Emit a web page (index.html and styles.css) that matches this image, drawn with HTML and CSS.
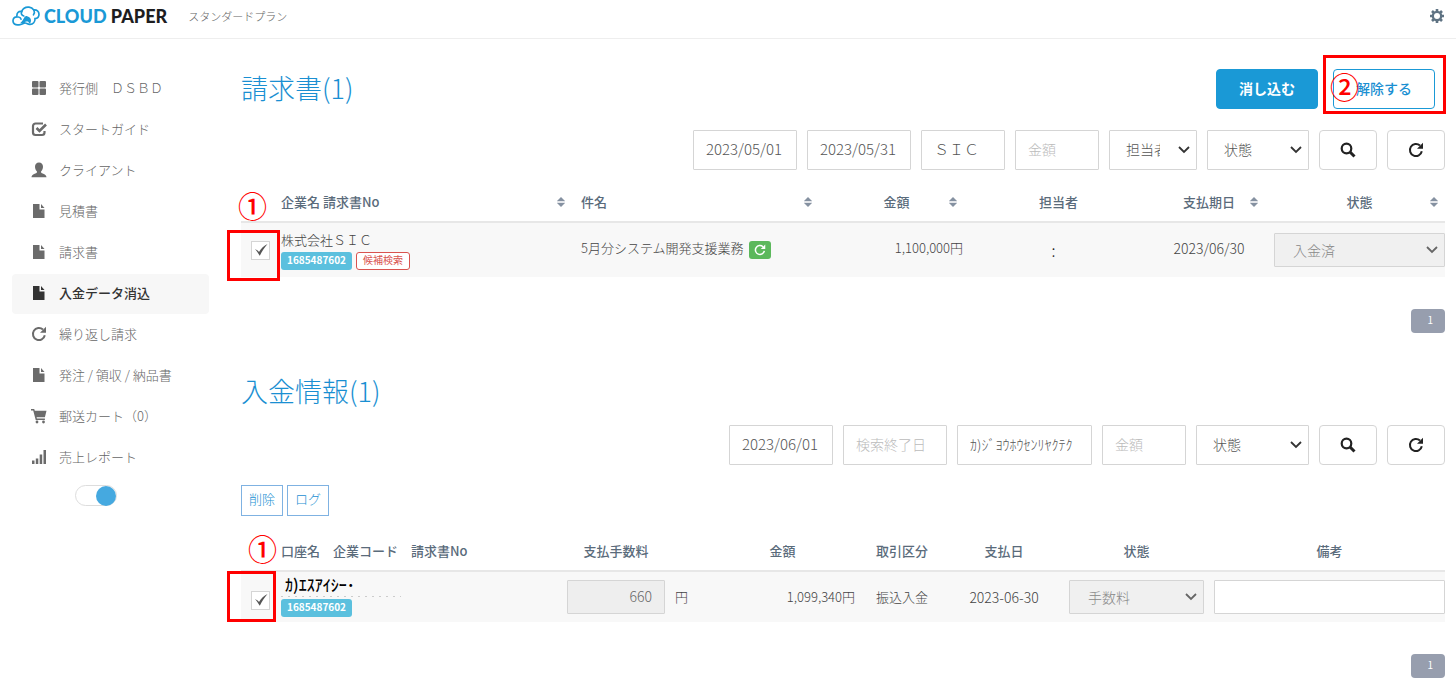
FILE: index.html
```html
<!DOCTYPE html>
<html lang="ja">
<head>
<meta charset="utf-8">
<title>CLOUD PAPER</title>
<meta name="viewport" content="width=device-width, initial-scale=1">
<link rel="stylesheet" href="styles.css">
</head>
<body>
<svg class="defs" aria-hidden="true">
  <symbol id="i-grid" viewBox="0 0 16 16"><path d="M2 1h4.500a1 1 0 0 1 1 1v4.500a1 1 0 0 1-1 1H2a1 1 0 0 1-1-1V2a1 1 0 0 1 1-1zM9.500 1H14a1 1 0 0 1 1 1v4.500a1 1 0 0 1-1 1H9.500a1 1 0 0 1-1-1V2a1 1 0 0 1 1-1zM2 8.500h4.500a1 1 0 0 1 1 1V14a1 1 0 0 1-1 1H2a1 1 0 0 1-1-1V9.500a1 1 0 0 1 1-1zM9.500 8.500H14a1 1 0 0 1 1 1V14a1 1 0 0 1-1 1H9.500a1 1 0 0 1-1-1V9.500a1 1 0 0 1 1-1z"/></symbol>
  <symbol id="i-check" viewBox="0 0 16 16"><path d="M12 2.500H4.500A2.500 2.500 0 0 0 2 5v6.500A2.500 2.500 0 0 0 4.500 14H11a2.500 2.500 0 0 0 2.500-2.500V10" fill="none" stroke="currentColor" stroke-width="2.200"/><path d="M5.500 7l3 3L15 3.500" fill="none" stroke="currentColor" stroke-width="2.600"/></symbol>
  <symbol id="i-user" viewBox="0 0 16 16"><path d="M8 .5c2.500 0 4 1.700 4 4.200 0 1.800-.7 3.600-1.900 4.500v1.300c0 .8 5.400 1.600 5.400 4.700H.5c0-3.100 5.400-3.900 5.400-4.700V9.200C4.700 8.300 4 6.500 4 4.700 4 2.200 5.500.5 8 .5z"/></symbol>
  <symbol id="i-file" viewBox="0 0 16 16"><path d="M2 1h6.500v5.500h5V15H2zM10 1l3.500 4H10z"/></symbol>
  <symbol id="i-reload" viewBox="0 0 16 16"><path d="M13.800 9.200A6 6 0 1 1 12 3.600" fill="none" stroke="currentColor" stroke-width="2"/><path d="M15 .8v6H9z"/></symbol>
  <symbol id="i-cart" viewBox="0 0 16 16"><path d="M0 1h3.200l.6 1.800H15.500l-1.600 6.400H5.600l.3 1.300h8v1.500H4.700L2.200 2.500H0z"/><circle cx="6" cy="14" r="1.400"/><circle cx="12.500" cy="14" r="1.400"/></symbol>
  <symbol id="i-bars" viewBox="0 0 16 16"><path d="M1 11.500h2.500V15H1zM4.800 9.500h2.500V15H4.800zM8.700 5.500h2.500V15H8.700zM12.500 1H15v14h-2.500z"/></symbol>
  <symbol id="i-search" viewBox="0 0 16 16"><circle cx="6.500" cy="6.500" r="4.800" fill="none" stroke="currentColor" stroke-width="2.200"/><path d="M10 10l4.500 4.500" stroke="currentColor" stroke-width="3"/></symbol>
  <symbol id="i-sort" viewBox="0 0 8 10"><path d="M4 0l4 4H0zM4 10L0 6h8z"/><path d="M0 4.500h8v1H0z" opacity=".45"/></symbol>
  <symbol id="i-gear" viewBox="0 0 16 16"><path d="M8 1v14M1 8h14M3 3l10 10M13 3L3 13" stroke="currentColor" stroke-width="2.600"/><circle cx="8" cy="8" r="5.300"/><circle cx="8" cy="8" r="3" fill="#fff"/></symbol>
  <symbol id="i-tick" viewBox="0 0 14 14"><path d="M1 6l3 1.800 1 1.200C7 5.500 10 2.500 13.500 1 10.500 4.500 8 8 5.800 12.800 4.500 11 3 8 1 6z"/></symbol>
  <symbol id="i-down" viewBox="0 0 12 8"><path d="M1 1l5 5 5-5" fill="none" stroke="currentColor" stroke-width="1.800"/></symbol>
</svg>

<header class="topbar">
  <a class="brand" href="#">
    <svg class="brand-mark" viewBox="0 0 28 20" aria-hidden="true"><g fill="none" stroke="#1a99d6" stroke-width="1.700" stroke-linecap="round"><path d="M7 18.800C3 19.500.9 17.300 1 14.700c.1-2.300 1.800-3.700 4-3.800-.6-3.900 1.500-6 4.700-5.500C11 2.300 14 .9 17 1.200c2.300.2 3.800 1.300 4.800 2.800 3-.4 5.200 1.500 5.200 4.300 0 2.700-1.600 4.200-4 4.300.2 3.200-2 5.500-5 5.700-2.500.2-3.500-1.500-5-1.300-1.800.2-3 1.500-6 1.800z"/><path d="M6.500 11c1.500.2 2.300 1 2.500 2.200M9.800 5.500c-1.500 2.500.5 4 2 4.500M22 4.500c.8 1.800.4 3.300-.5 4.300"/></g><path d="M8 17.200c1.500-1 3-3.200 4-5.200.8-1.600 2-2.500 3.600-1.600 2 .6 3.400 1.800 3.400 4 0 1.500-.6 2.600-1.500 3.200l-1.500-2.100-2.300.1-1.200 1.600c-1.200-.5-3 .4-4.500 0z" fill="#1a99d6"/></svg>
    <span class="brand-name"><span class="brand-blue">CLOUD</span> PAPER</span>
  </a>
  <span class="plan">スタンダードプラン</span>
  <button class="gear" type="button" aria-label="設定"><svg class="icon"><use href="#i-gear"/></svg></button>
</header>

<div class="layout">
  <nav class="sidebar">
    <a href="#"><svg class="icon"><use href="#i-grid"/></svg>発行側　ＤＳＢＤ</a>
    <a href="#"><svg class="icon"><use href="#i-check"/></svg>スタートガイド</a>
    <a href="#"><svg class="icon"><use href="#i-user"/></svg>クライアント</a>
    <a href="#"><svg class="icon"><use href="#i-file"/></svg>見積書</a>
    <a href="#"><svg class="icon"><use href="#i-file"/></svg>請求書</a>
    <a href="#" class="active"><svg class="icon"><use href="#i-file"/></svg>入金データ消込</a>
    <a href="#"><svg class="icon"><use href="#i-reload"/></svg>繰り返し請求</a>
    <a href="#"><svg class="icon"><use href="#i-file"/></svg>発注 / 領収 / 納品書</a>
    <a href="#"><svg class="icon"><use href="#i-cart"/></svg>郵送カート（0）</a>
    <a href="#"><svg class="icon"><use href="#i-bars"/></svg>売上レポート</a>
    <input class="switch" type="checkbox" role="switch" checked aria-label="表示切替">
  </nav>

  <main class="main">
    <section class="invoices">
      <div class="title-row">
        <h1>請求書(1)</h1>
        <div class="actions">
          <button class="btn primary" type="button">消し込む</button>
          <div class="marked">
            <button class="btn outline" type="button">解除する</button>
            <span class="frame frame-action"></span>
            <span class="mark mark-action">②</span>
          </div>
        </div>
      </div>
      <form class="filters">
        <input class="w-date" type="text" value="2023/05/01" aria-label="検索開始日">
        <input class="w-date" type="text" value="2023/05/31" aria-label="検索終了日">
        <input class="w-short" type="text" value="ＳＩＣ" aria-label="企業名">
        <input class="w-short" type="text" placeholder="金額" aria-label="金額">
        <div class="select w-staff"><select aria-label="担当者"><option>担当者</option></select><svg><use href="#i-down"/></svg></div>
        <div class="select w-state"><select aria-label="状態"><option>状態</option></select><svg><use href="#i-down"/></svg></div>
        <button class="tool" type="button" aria-label="検索"><svg class="icon"><use href="#i-search"/></svg></button>
        <button class="tool" type="button" aria-label="再読込"><svg class="icon"><use href="#i-reload"/></svg></button>
      </form>
      <table class="grid">
        <colgroup><col class="c40"><col><col class="c247"><col class="c145"><col class="c171"><col class="c130"><col class="c171"></colgroup>
        <thead>
          <tr>
            <th class="check"><span class="mark mark-head">①</span></th>
            <th><div class="head start">企業名 請求書No<svg class="sort"><use href="#i-sort"/></svg></div></th>
            <th><div class="head start">件名<svg class="sort"><use href="#i-sort"/></svg></div></th>
            <th><div class="head amount">金額<svg class="sort"><use href="#i-sort"/></svg></div></th>
            <th>担当者</th>
            <th><div class="head">支払期日<svg class="sort"><use href="#i-sort"/></svg></div></th>
            <th><div class="head state">状態<svg class="sort"><use href="#i-sort"/></svg></div></th>
          </tr>
        </thead>
        <tbody>
          <tr>
            <td class="check"><label class="tick"><input type="checkbox" checked aria-label="株式会社ＳＩＣを選択"><svg><use href="#i-tick"/></svg></label><span class="frame frame-invoice"></span></td>
            <td><div class="company">株式会社ＳＩＣ</div><div class="tags"><span class="tag info">1685487602</span><a class="tag danger" href="#">候補検索</a></div></td>
            <td><div class="subject"><span class="raised">5月分システム開発支援業務</span><button class="repeat" type="button" aria-label="繰り返し"><svg class="icon"><use href="#i-reload"/></svg></button></div></td>
            <td class="num raised">1,100,000円</td>
            <td class="center staff">:</td>
            <td class="center date raised">2023/06/30</td>
            <td><div class="select cell-select"><select disabled aria-label="状態"><option>入金済</option></select><svg><use href="#i-down"/></svg></div></td>
          </tr>
        </tbody>
      </table>
      <div class="pager"><a href="#">1</a></div>
    </section>

    <section class="payments">
      <div class="title-row"><h2>入金情報(1)</h2></div>
      <form class="filters">
        <input class="w-date" type="text" value="2023/06/01" aria-label="検索開始日">
        <input class="w-date" type="text" placeholder="検索終了日" aria-label="検索終了日">
        <input class="w-account" type="text" value="ｶ)ｼﾞﾖｳﾎｳｾﾝﾘﾔｸﾃｸ" aria-label="口座名">
        <input class="w-short" type="text" placeholder="金額" aria-label="金額">
        <div class="select w-state2"><select aria-label="状態"><option>状態</option></select><svg><use href="#i-down"/></svg></div>
        <button class="tool" type="button" aria-label="検索"><svg class="icon"><use href="#i-search"/></svg></button>
        <button class="tool" type="button" aria-label="再読込"><svg class="icon"><use href="#i-reload"/></svg></button>
      </form>
      <div class="mini-actions">
        <button type="button">削除</button>
        <button type="button">ログ</button>
      </div>
      <table class="grid payment-grid">
        <colgroup><col class="c40"><col><col class="c118"><col class="c25"><col class="c165"><col class="c74"><col class="c130"><col class="c145"><col class="c231"></colgroup>
        <thead>
          <tr>
            <th class="check"><span class="mark mark-head2">①</span></th>
            <th class="left">口座名　企業コード　請求書No</th>
            <th>支払手数料</th>
            <th></th>
            <th>金額</th>
            <th>取引区分</th>
            <th>支払日</th>
            <th class="gap-right">状態</th>
            <th>備考</th>
          </tr>
        </thead>
        <tbody>
          <tr>
            <td class="check lowered"><label class="tick"><input type="checkbox" checked aria-label="ｶ)ｴｽｱｲｼｰを選択"><svg><use href="#i-tick"/></svg></label><span class="frame frame-payment"></span></td>
            <td class="raised"><div class="payer">ｶ)ｴｽｱｲｼｰ･</div><div class="trace"></div><div class="tags"><span class="tag info">1685487602</span></div></td>
            <td class="fee-cell"><input class="cell fee" type="text" value="660" disabled aria-label="支払手数料"></td>
            <td>円</td>
            <td class="num">1,099,340円</td>
            <td class="center">振込入金</td>
            <td class="center date">2023-06-30</td>
            <td class="gap-right"><div class="select cell-select"><select disabled aria-label="状態"><option>手数料</option></select><svg><use href="#i-down"/></svg></div></td>
            <td><input class="cell" type="text" aria-label="備考"></td>
          </tr>
        </tbody>
      </table>
      <div class="pager"><a href="#">1</a></div>
    </section>
  </main>
</div>
</body>
</html>
```
FILE: styles.css
```css
* { box-sizing: border-box; }

body {
  margin: 0;
  background: #fff;
  color: #444;
  font: 300 13px/18px "Noto Sans CJK JP", sans-serif;
}

button, input, select { font: inherit; color: inherit; margin: 0; }
button { cursor: pointer; }
a { color: inherit; text-decoration: none; }

.defs { position: absolute; width: 0; height: 0; }
.icon { width: 16px; height: 16px; fill: currentColor; flex: none; display: block; }

/* Top bar */
.topbar {
  display: flex;
  align-items: center;
  height: 39px;
  padding: 0 11px 6px 12px;
  border-bottom: 1px solid #eee;
}
.brand { display: flex; align-items: center; gap: 4px; }
.brand-mark { width: 28px; height: 20px; }
.brand-name { color: #1d1d1f; font: 900 18px/24px Lato, sans-serif; }
.brand-blue { color: #1a99d6; }
.plan { margin-left: 21px; color: #666; font-size: 11px; }
.gear { margin-left: auto; padding: 0; border: 0; background: none; color: #5f7383; }

.layout { display: flex; gap: 32px; padding: 30px 11px 0 12px; }

/* Side navigation */
.sidebar { display: flex; flex-direction: column; gap: 1px; flex: none; width: 197px; }
.sidebar a {
  display: flex;
  align-items: center;
  gap: 12px;
  height: 40px;
  padding: 0 0 2px 19px;
  border-radius: 4px;
  color: #666;
}
.sidebar .icon { color: #6b6b6b; }
.sidebar .active { background: #f7f7f7; color: #333; font-weight: 500; }
.sidebar .active .icon { color: #333; }
.switch {
  appearance: none;
  width: 42px;
  height: 21px;
  margin: 6px 0 0 63px;
  border: 1px solid #ddd;
  border-radius: 11px;
  display: flex;
  justify-content: flex-end;
  align-items: center;
}
.switch::before { content: ""; width: 20px; height: 20px; border-radius: 50%; background: #45a9e0; }

/* Content */
.main { flex: 1; min-width: 0; }
.title-row { display: flex; justify-content: space-between; align-items: center; min-height: 40px; }
h1, h2 { margin: 0; padding-bottom: 2px; color: #1a8fd2; font-size: 27px; line-height: 38px; font-weight: 300; }
.actions { display: flex; gap: 15px; padding-right: 10px; }
.btn { width: 102px; height: 40px; padding: 0 0 2px; border-radius: 4px; font-size: 14px; font-weight: 500; border: 1px solid #1a99d6; }
.primary { background: #1a99d6; color: #fff; font-weight: 700; }
.outline { background: #fff; color: #1a8fd2; }

.filters { display: flex; justify-content: flex-end; gap: 10px; margin-top: 21px; }
.filters input, .select select {
  height: 40px;
  padding: 0 12px 3px;
  border: 1px solid #d5d5d5;
  border-radius: 1px;
  background: #fff;
  color: #555;
  font-size: 15px;
}
.filters input::placeholder { color: #bbb; font-size: 14px; }
.filters .w-date { width: 104px; }
.filters .w-short { width: 84px; }
.w-staff { width: 88px; }
.w-state { width: 102px; }
.w-state2 { width: 113px; }
.filters .w-account { width: 135px; font-size: 14px; }

.select { display: grid; align-items: center; }
.select select {
  grid-area: 1 / 1;
  width: 100%;
  appearance: none;
  padding: 0 36px 2px 16px;
  font-size: 14px;
  text-overflow: clip;
}
.select svg {
  grid-area: 1 / 1;
  justify-self: end;
  width: 12px;
  height: 8px;
  margin-right: 7px;
  color: #333;
  pointer-events: none;
}
.cell-select select { height: 34px; padding: 0 36px 0 18px; }
.cell-select select:disabled { background: #f0f0f0; color: #888; opacity: 1; }
.cell-select svg { color: #666; }

.tool {
  display: flex;
  align-items: center;
  justify-content: center;
  width: 58px;
  height: 40px;
  border: 1px solid #d5d5d5;
  border-radius: 4px;
  background: #fff;
  color: #222;
}

/* Tables */
.grid { width: 100%; margin-top: 14px; border-collapse: separate; border-spacing: 0; table-layout: fixed; }
.grid th { height: 39px; padding: 0 0 2px; border-bottom: 2px solid #e7e7e7; color: #5a6b7b; font-weight: 500; white-space: nowrap; }
.grid td { height: 54px; padding: 0; background: #f8f8f8; white-space: nowrap; }
.grid .left { text-align: left; }
.grid .center { text-align: center; }
.grid .num { text-align: right; padding-right: 10px; }
.grid .date { font-size: 14px; }
.grid .gap-right { padding-right: 10px; }
.grid .staff { padding-right: 10px; color: #222; font-size: 16px; }
.grid .raised, .raised { padding-bottom: 4px; }
.grid .lowered { padding-top: 6px; }
.check { position: relative; }
.c25 { width: 25px; }
.c40 { width: 40px; }
.c74 { width: 74px; }
.c118 { width: 118px; }
.c130 { width: 130px; }
.c145 { width: 145px; }
.c165 { width: 165px; }
.c171 { width: 171px; }
.c231 { width: 231px; }
.c247 { width: 247px; }

.head { display: grid; grid-template-columns: 1fr auto 1fr; align-items: center; padding: 0 16px; }
.head::before { content: ""; }
.head.start { grid-template-columns: auto 1fr; padding-left: 0; }
.head.start::before { display: none; }
.head.amount { padding-left: 8px; }
.head.state { padding: 0 7px; }
.sort { justify-self: end; width: 8px; height: 10px; fill: #8591a1; }

.tick { display: grid; width: 19px; height: 19px; margin-left: 10px; }
.tick input { grid-area: 1 / 1; appearance: none; width: 19px; height: 19px; border: 1px solid #d5d5d5; background: #fff; }
.tick svg { grid-area: 1 / 1; place-self: center; width: 14px; height: 14px; fill: #555; pointer-events: none; }

.tags { display: flex; gap: 4px; }
.tag { height: 18px; padding: 0 5px; border: 1px solid transparent; border-radius: 3px; font-size: 10px; line-height: 14px; }
.info { background: #5bc0de; color: #fff; font-weight: 700; }
.danger { padding: 0 6px; border-color: #d9534f; background: #fff; color: #d9534f; font-weight: 400; }
.company { padding-bottom: 3px; line-height: 18px; }
.subject { display: flex; align-items: center; gap: 5px; }
.repeat {
  display: flex;
  align-items: center;
  justify-content: center;
  width: 22px;
  height: 18px;
  padding: 0;
  border: 0;
  border-radius: 3px;
  background: #5cb85c;
  color: #fff;
}
.repeat .icon { width: 12px; height: 12px; }

.cell {
  display: block;
  width: 100%;
  height: 34px;
  padding: 0 12px 2px;
  border: 1px solid #d5d5d5;
  border-radius: 1px;
  background: #fff;
  font-size: 14px;
}
.cell:disabled { background: #eee; color: #666; }
.fee-cell .fee { width: 98px; margin: 0 auto; text-align: right; }

.payer { padding-left: 4px; color: #000; font-size: 16px; font-weight: 500; line-height: 20px; }
.trace { width: 120px; height: 1px; margin: 2px 0; background: repeating-linear-gradient(90deg, #ccc 0 2px, transparent 2px 7px); }

.pager { display: flex; justify-content: flex-end; margin-top: 32px; }
.pager a {
  width: 34px;
  height: 24px;
  padding-right: 12px;
  border-radius: 4px;
  background: #979eae;
  color: #fff;
  font-size: 10px;
  font-weight: 400;
  line-height: 22px;
  text-align: right;
}

.payments { margin-top: 39px; }
.payments .filters { margin-top: 13px; }
.mini-actions { display: flex; gap: 4px; margin-top: 20px; }
.mini-actions button {
  width: 42px;
  height: 31px;
  padding: 0 0 4px;
  border: 1px solid #7fb2e2;
  background: #fff;
  color: #1a8fd2;
}
.payment-grid { margin-top: 17px; }
.payment-grid td { height: 50px; }

/* Red annotations laid over the screen */
.marked { position: relative; }
.frame { position: absolute; border: 3px solid #f00; pointer-events: none; }
.frame-action { inset: -14px -11px -5px -10px; }
.frame-invoice { left: -14px; right: 1px; top: 7px; height: 51px; }
.frame-payment { left: -14px; right: 5px; top: -1px; height: 51px; }
.mark { position: absolute; color: #f00; font-size: 29px; line-height: 28px; font-weight: 500; pointer-events: none; }
.mark-action { left: -3px; top: 3px; }
.mark-head { left: -3px; top: 7px; }
.mark-head2 { left: 7px; top: 1px; }
```
